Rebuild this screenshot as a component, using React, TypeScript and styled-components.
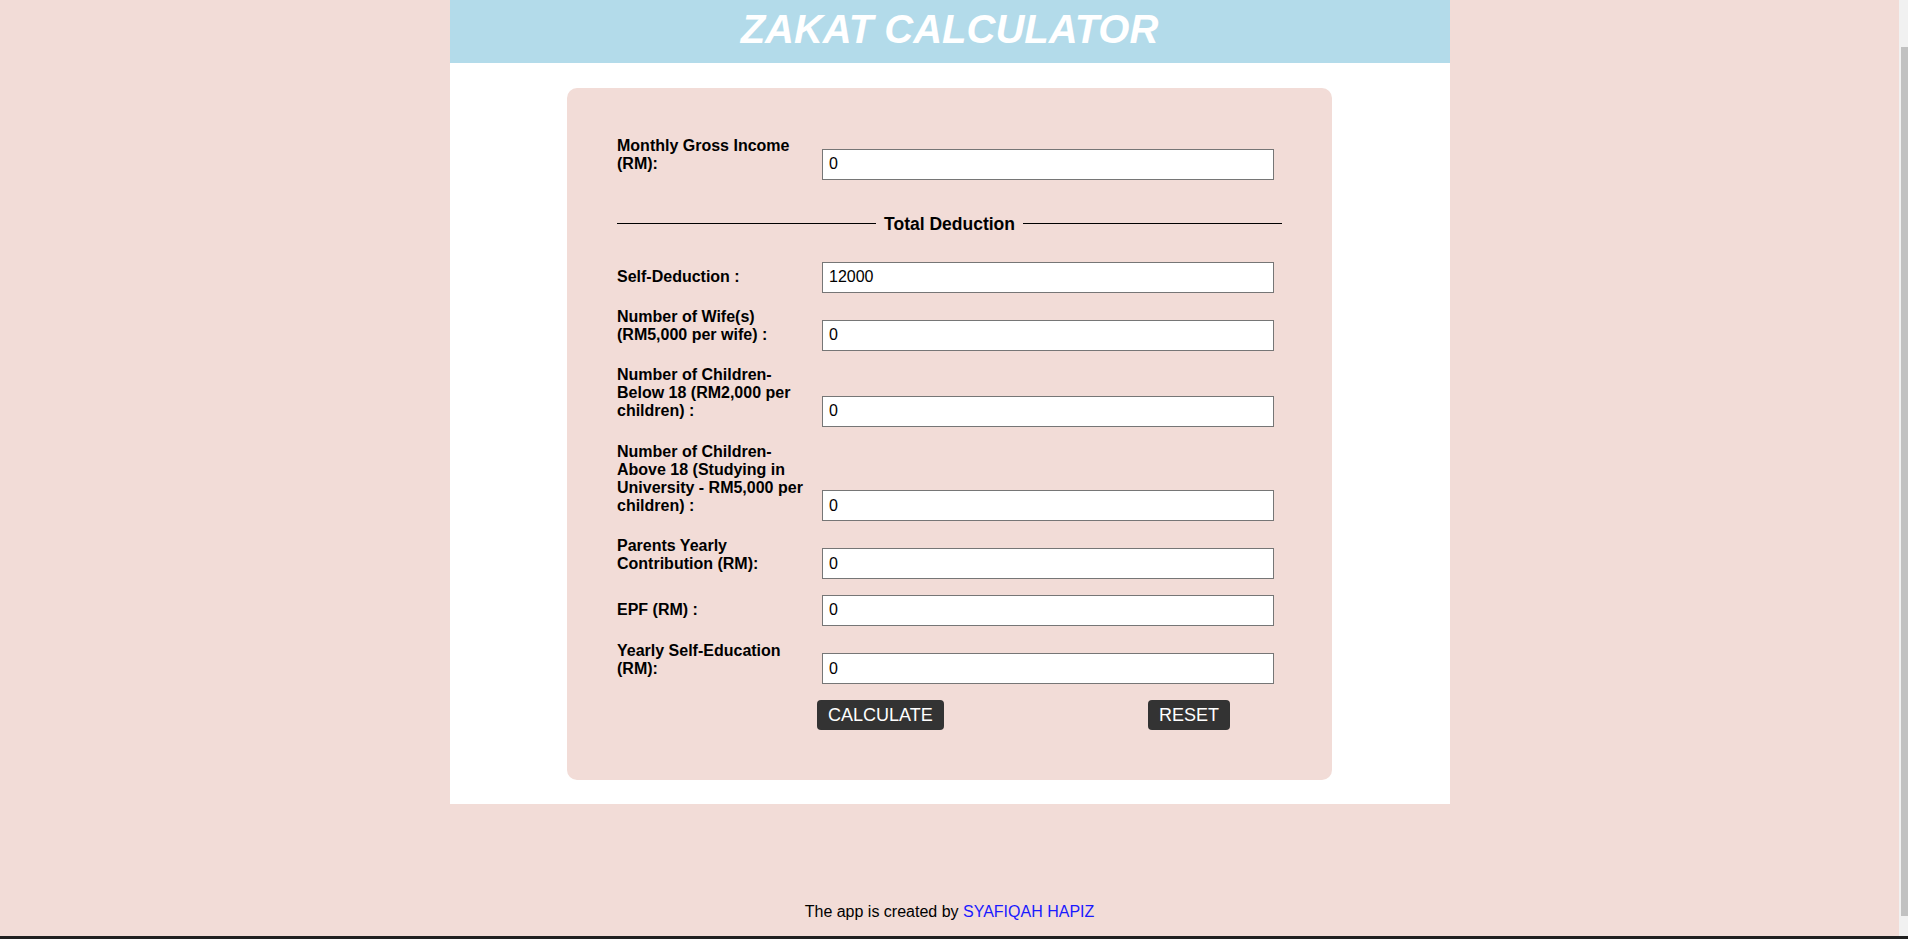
import React from "react";
import styled, { createGlobalStyle } from "styled-components";

const GlobalStyle = createGlobalStyle`
  body {
    margin: 0 9px 0 0;
    background: #f2dcd7;
    font-family: "Liberation Sans", Arial, sans-serif;
    color: #000;
  }
`;

const Container = styled.div`
  width: 1000px;
  margin: 0 auto;
  background: #ffffff;
`;

const Header = styled.header`
  height: 63px;
  box-sizing: border-box;
  padding-top: 7px;
  background: #b3dbea;
  display: flex;
  justify-content: center;
  align-items: flex-start;
`;

const Title = styled.h1`
  margin: 0;
  font-family: "Liberation Sans", Arial, sans-serif;
  font-size: 40px;
  font-weight: bold;
  font-style: italic;
  color: #ffffff;
  line-height: normal;
`;

const Content = styled.main`
  padding: 25px 0 24px;
`;

const Card = styled.form`
  width: 765px;
  box-sizing: border-box;
  margin: 0 auto;
  padding: 49px 50px 50px;
  background: #f2dcd7;
  border-radius: 10px;
`;

const Row = styled.div`
  display: flex;
  align-items: last baseline;
  gap: 5px;
  & + & {
    margin-top: 15.7px;
  }
`;

const Label = styled.label`
  width: 200px;
  flex-shrink: 0;
  font-size: 16px;
  font-weight: bold;
  line-height: normal;
`;

const Input = styled.input`
  width: 452px;
  height: 31px;
  box-sizing: border-box;
  border: 1px solid #767676;
  border-radius: 0;
  padding: 0 6px;
  margin: 0;
  background: #ffffff;
  font-family: "Liberation Sans", Arial, sans-serif;
  font-size: 16px;
  color: #000;
`;

const Divider = styled.div`
  display: flex;
  align-items: center;
  gap: 8px;
  margin: 34px 0 28px;
  font-size: 17.5px;
  font-weight: bold;
  line-height: 20px;
  &::before,
  &::after {
    content: "";
    flex: 1;
    border-top: 1px solid #000;
  }
`;

const ButtonRow = styled.div`
  display: flex;
  justify-content: space-between;
  margin-top: 16px;
  padding: 0 52px 0 200px;
`;

const Button = styled.button`
  height: 30px;
  box-sizing: border-box;
  padding: 0 11px;
  border: none;
  border-radius: 4px;
  background: #333333;
  color: #ffffff;
  font-family: "Liberation Sans", Arial, sans-serif;
  font-size: 18px;
  line-height: 30px;
  cursor: pointer;
`;

const Footer = styled.footer`
  margin-top: 99px;
  padding-bottom: 20px;
  text-align: center;
  font-size: 16px;
  line-height: normal;
  color: #000;
`;

const Link = styled.a`
  color: #1a1aff;
  text-decoration: none;
`;

const ScrollTrack = styled.div`
  position: fixed;
  top: 0;
  right: 0;
  bottom: 0;
  width: 9px;
  background: #f1f1f1;
  z-index: 1;
`;

const ScrollThumb = styled.div`
  position: absolute;
  top: 47px;
  bottom: 23px;
  left: 2px;
  right: 0;
  background: #c1c1c1;
`;

const BottomBar = styled.div`
  position: fixed;
  left: 0;
  right: 0;
  bottom: 0;
  height: 3px;
  background: #202020;
  z-index: 2;
`;

const fields: { label: string; value: string }[] = [
  { label: "Self-Deduction :", value: "12000" },
  { label: "Number of Wife(s) (RM5,000 per wife) :", value: "0" },
  { label: "Number of Children-Below 18 (RM2,000 per children) :", value: "0" },
  {
    label:
      "Number of Children-Above 18 (Studying in University - RM5,000 per children) :",
    value: "0",
  },
  { label: "Parents Yearly Contribution (RM):", value: "0" },
  { label: "EPF (RM) :", value: "0" },
  { label: "Yearly Self-Education (RM):", value: "0" },
];

export default function App() {
  return (
    <>
      <GlobalStyle />
      <Container>
        <Header>
          <Title>ZAKAT CALCULATOR</Title>
        </Header>
        <Content>
          <Card onSubmit={(e) => e.preventDefault()}>
            <Row>
              <Label>Monthly Gross Income (RM):</Label>
              <Input type="text" defaultValue="0" />
            </Row>
            <Divider>Total Deduction</Divider>
            {fields.map((f) => (
              <Row key={f.label}>
                <Label>{f.label}</Label>
                <Input type="text" defaultValue={f.value} />
              </Row>
            ))}
            <ButtonRow>
              <Button type="button">CALCULATE</Button>
              <Button type="reset">RESET</Button>
            </ButtonRow>
          </Card>
        </Content>
      </Container>
      <Footer>
        The app is created by <Link href="#">SYAFIQAH HAPIZ</Link>
      </Footer>
      <ScrollTrack>
        <ScrollThumb />
      </ScrollTrack>
      <BottomBar />
    </>
  );
}
